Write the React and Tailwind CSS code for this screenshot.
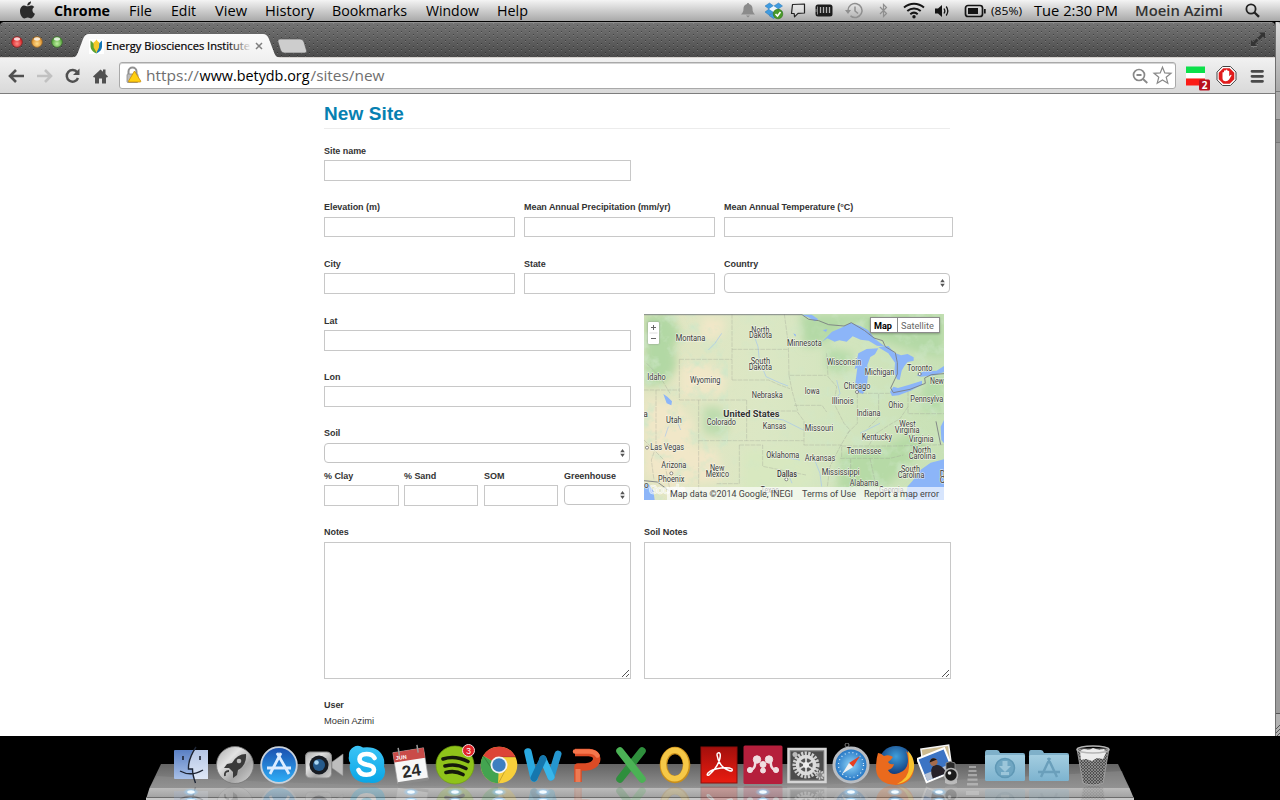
import React from "react";

/* ---------- macOS menu bar ---------- */
const menus = [
  ["Chrome", "w-[75px] font-bold", 56],
  ["File", "w-[42px]", 23],
  ["Edit", "w-[44px]", 25],
  ["View", "w-[50px]", 32],
  ["History", "w-[67px]", 49],
  ["Bookmarks", "w-[94px]", 75],
  ["Window", "w-[71px]", 53],
  ["Help", "w-[40px]", 31],
];

function FitText({ children, width, size, weight = 400, fill = "#000", height = 22, base = 16, family = "Open Sans" }) {
  return (
    <svg width={width + 2} height={height} className="block shrink-0 overflow-visible">
      <text x="0" y={base} fontFamily={`${family}, sans-serif`} fontSize={size} fontWeight={weight} fill={fill} textLength={width} lengthAdjust="spacingAndGlyphs">
        {children}
      </text>
    </svg>
  );
}

function StatusIcons() {
  return (
    <svg width="260" height="21" viewBox="738 0 260 21" className="block shrink-0">
      <path d="M748 3c-.8 0-1 .5-1 1-2.500.5-3.500 2.500-3.500 4.500 0 3-.8 4.500-2.500 6h14c-1.700-1.500-2.500-3-2.500-6 0-2-1-4-3.500-4.500 0-.5-.2-1-1-1zM746 15.500h4l-2 2z" fill="#8b8b8b" />
      <g fill="#3f9be0" stroke="#2674b5" strokeWidth=".5">
        <path d="M765 6l4.500-3 4 3-4.500 3zM774 6l4.500-3 4 3-4.500 3zM765 12l4-3 4.500 3-4.500 3zM774 12l4-3 4.500 3-4.500 3z" />
        <path d="M769 15.500l4.500-3 4.500 3-4.500 3z" />
      </g>
      <path d="M769 9l4.500-3 4.500 3-4.500 3z" fill="#eef6fc" />
      <circle cx="778" cy="14" r="4.800" fill="#4a9a2a" stroke="#2f7316" strokeWidth=".6" />
      <path d="M775.500 14l2 2 3-4" stroke="#fff" strokeWidth="1.600" fill="none" />
      <path d="M792.500 4.500l12-.5v9l-6.500.3-3.500 3.500-.3-3.300h-2.700z" fill="#eee" fillOpacity=".4" stroke="#222" strokeWidth="1.200" strokeLinejoin="round" />
      <rect x="815.500" y="4.500" width="17" height="12" rx="2.500" fill="#1c1c1c" />
      <path d="M817.500 6.500v8M816 9v3" stroke="#bbb" strokeWidth=".7" />
      <path d="M820.500 7v6M823.500 7v6M826.500 7v6M829.500 7v6" stroke="#b5b5b5" strokeWidth="1.300" />
      <g fill="none" stroke="#8f8f8f" strokeWidth="1.500">
        <path d="M848 10.500a7 7 0 1 1 2.500 5.400" />
        <path d="M855 6.500v4.500l3 2.500" />
      </g>
      <path d="M845 10h6l-3 4z" fill="#8f8f8f" />
      <path d="M880 7l6.500 6.500-3 3V4.500l3 3L880 14" fill="none" stroke="#8f8f8f" strokeWidth="1.200" />
      <g fill="none" stroke="#151515" strokeWidth="2">
        <path d="M904 7.500c6-5 14-5 20 0M907.300 11c4-3.500 9.400-3.500 13.400 0M910.300 14.200c2.200-1.900 5.200-1.900 7.400 0" />
      </g>
      <circle cx="914" cy="16.800" r="1.700" fill="#151515" />
      <path d="M935 8.500h3l4-3.500v12l-4-3.500h-3z" fill="#151515" />
      <path d="M944 8.500q1.700 2.500 0 5M946.200 6.500q3.200 4.500 0 9" stroke="#151515" strokeWidth="1.300" fill="none" />
      <rect x="965.500" y="5.500" width="17" height="11" rx="2.500" fill="none" stroke="#151515" strokeWidth="1.700" />
      <rect x="968" y="8" width="10" height="6" fill="#151515" />
      <path d="M984 9h1.700v4.500H984z" fill="#151515" />
    </svg>
  );
}

function MenuBar() {
  return (
    <div className="flex h-[22px] items-start border-b border-black bg-linear-to-b from-[#f4f4f4] to-[#a9a9a9]">
      <svg width="54" height="21" className="block shrink-0">
        <path d="M31 1.500c.2 2-1.600 4-3.700 4.100C27 3.600 29 1.600 31 1.500zM27.500 6.300c1 0 2-1 3.800-.9 1.200 0 2.400.7 3 1.600-2.800 1.700-2.300 5.600.7 6.800-.8 2-2.200 4.500-3.900 4.600-1.300 0-1.700-.8-3.400-.8s-2.100.8-3.400.8c-2-.1-4.400-4-4.300-7.500.1-3.500 2.200-5.500 4.300-5.500 1.400 0 2.300.9 3.200.9z" fill="#2a2a2a" />
      </svg>
      {menus.map(([t, c, w]) => (
        <div key={t} className={"shrink-0 " + c}>
          <FitText width={w} size={14} weight={t === "Chrome" ? 700 : 400}>{t}</FitText>
        </div>
      ))}
      <div className="w-[201px] shrink-0" />
      <StatusIcons />
      <div className="w-[43px] shrink-0 -ml-[7px]"><FitText width={31} size={11} base={15}>(85%)</FitText></div>
      <div className="w-[101px] shrink-0"><FitText width={84} size={14}>Tue 2:30 PM</FitText></div>
      <div className="w-[110px] shrink-0"><FitText width={88} size={14} weight={600} fill="#333">Moein Azimi</FitText></div>
      <svg width="16" height="21" className="block shrink-0">
        <circle cx="6" cy="9" r="4.600" fill="none" stroke="#222" strokeWidth="1.800" />
        <path d="M9.500 12.500l4.500 4.300" stroke="#222" strokeWidth="2.300" />
      </svg>
    </div>
  );
}

/* ---------- Chrome window frame ---------- */
function TabStrip() {
  return (
    <svg width="1275" height="36" viewBox="0 22 1275 36" className="block shrink-0">
      <defs>
        <linearGradient id="strip" x1="0" y1="0" x2="0" y2="1">
          <stop offset="0" stopColor="#747474" />
          <stop offset="1" stopColor="#4a4a4a" />
        </linearGradient>
        <pattern id="dots" width="8" height="6" patternUnits="userSpaceOnUse">
          <path d="M1 1h1v1h-1zM5 4h1v1h-1z" fill="#000" opacity=".35" />
          <path d="M1 2h1v1h-1zM5 5h1v1h-1z" fill="#fff" opacity=".16" />
        </pattern>
        <linearGradient id="tabg" x1="0" y1="0" x2="0" y2="1">
          <stop offset="0" stopColor="#fbfbfb" />
          <stop offset="1" stopColor="#f1f1f1" />
        </linearGradient>
        <linearGradient id="tabfade" x1="226" x2="249" y1="0" y2="0" gradientUnits="userSpaceOnUse">
          <stop offset="0" stopColor="#000" />
          <stop offset="1" stopColor="#000" stopOpacity=".08" />
        </linearGradient>
        <radialGradient id="red" cy=".65"><stop offset="0" stopColor="#ff8d86" /><stop offset="1" stopColor="#d8262a" /></radialGradient>
        <radialGradient id="yel" cy=".65"><stop offset="0" stopColor="#ffdc8a" /><stop offset="1" stopColor="#e09430" /></radialGradient>
        <radialGradient id="grn" cy=".65"><stop offset="0" stopColor="#bff0a0" /><stop offset="1" stopColor="#5aa840" /></radialGradient>
      </defs>
      <path d="M0 58V26q0-4 4-4h1267q4 0 4 4v32z" fill="url(#strip)" />
      <path d="M0 58V26q0-4 4-4h1267q4 0 4 4v32z" fill="url(#dots)" />
      <path d="M3 22.500h1269" stroke="#8e8e8e" />
      <rect x="0" y="57" width="1275" height="1" fill="#d6d2cf" />
      <g strokeWidth=".8">
        <circle cx="17" cy="42" r="5.400" fill="url(#red)" stroke="#7d2a28" />
        <circle cx="37" cy="42" r="5.400" fill="url(#yel)" stroke="#8a5f28" />
        <circle cx="57" cy="42" r="5.400" fill="url(#grn)" stroke="#3c6a30" />
      </g>
      <g fill="#fff" opacity=".8">
        <ellipse cx="17" cy="39" rx="3" ry="1.700" /><ellipse cx="37" cy="39" rx="3" ry="1.700" /><ellipse cx="57" cy="39" rx="3" ry="1.700" />
      </g>
      <path d="M72 58c4-1 5-3 6.500-7l4.500-12q2-5 6-5h174q4 0 6 5l4.500 12c1.500 4 2.500 6 6.500 7z" fill="url(#tabg)" />
      <path d="M280 39h20q3 0 4 3l2.500 8.500q.8 2.500-2 2.500h-20q-3 0-4-3l-2.500-8q-.8-3 2-3z" fill="#cdcdcd" stroke="#4f4f4f" strokeWidth=".6" />
      <rect x="89" y="39" width="15" height="15" fill="#fff" />
      <path d="M96.500 46l5.500-5.500v6c0 3-2 5-5.500 7z" fill="#1377b8" />
      <path d="M90.500 40.500l6 5.500v7.500C93 52 90.500 49.500 90.500 46z" fill="#5da233" />
      <path d="M93.500 42.500q2-1 3-3 1 2 2.800 3l-.3 5-2.500 5-2.800-5z" fill="#f4c92b" />
      <text x="106" y="50.300" fontFamily="Open Sans, sans-serif" fontSize="10.500" fill="url(#tabfade)" stroke="url(#tabfade)" strokeWidth=".2" textLength="144" lengthAdjust="spacingAndGlyphs">Energy Biosciences Institute</text>
      <path d="M256 43l6 6M262 43l-6 6" stroke="#7f7f7f" strokeWidth="1.500" />
      <path d="M1259 32.500h6v6l-2-2-3.500 3.500-2-2 3.500-3.500zM1251 46v-6l2 2 3.500-3.500 2 2-3.500 3.500 2 2z" fill="#343434" />
      <path d="M1251 46.500h6" stroke="#999" strokeWidth=".6" />
    </svg>
  );
}

function Toolbar() {
  return (
    <div className="flex h-9 items-center border-b border-[#7d7d7d] bg-linear-to-b from-[#f1f1f1] to-[#d9d9d9]">
      <svg width="119" height="34" viewBox="0 58 119 34" className="block shrink-0">
        <path d="M10 75h14M16 69l-6 6 6 6" fill="none" stroke="#505050" strokeWidth="2.600" />
        <path d="M37 75h14M45 69l6 6-6 6" fill="none" stroke="#c1c1c1" strokeWidth="2.600" />
        <path d="M77.300 71.500A5.800 5.800 0 1 0 78 77" fill="none" stroke="#505050" strokeWidth="2.500" />
        <path d="M79.500 67.500v6.500H73z" fill="#505050" />
        <path d="M93 75.500l7.500-7 2.500 2.300V68.500h2.500v4.500L108 75.500l-1.200 1.200-.8-.7V82.500h-4v-5h-3v5h-4v-6.500l-.8.700z" fill="#505050" />
      </svg>
      <div className="flex h-[27px] w-[1057px] shrink-0 items-center rounded-[3px] border border-[#a9a9a9] bg-white shadow-[inset_0_1px_0_#d4d4d4]">
        <svg width="26" height="25" viewBox="120 63 26 25" className="block shrink-0">
          <path d="M128.500 74v-2.500a4 4 0 0 1 8 0V74" fill="none" stroke="#909090" strokeWidth="2" />
          <rect x="127" y="74" width="11" height="8.500" rx="1" fill="#bbb" stroke="#888" strokeWidth=".8" />
          <path d="M134.500 71l6.200 10q.4 1-.6 1h-11q-1 0-.5-1z" fill="#ffd012" stroke="#c98d05" strokeWidth=".8" />
        </svg>
        <svg width="240" height="25" className="block shrink-0 overflow-visible">
          <text y="18" fontFamily="Open Sans, sans-serif" fontSize="14.500" fill="#6f6f6f">
            <tspan x="0" textLength="53" lengthAdjust="spacingAndGlyphs">https://</tspan>
            <tspan x="53.500" fill="#000" textLength="110" lengthAdjust="spacingAndGlyphs">www.betydb.org</tspan>
            <tspan x="164.500" textLength="74" lengthAdjust="spacingAndGlyphs">/sites/new</tspan>
          </text>
        </svg>
        <svg width="45" height="25" viewBox="1130 63 45 25" className="ml-auto block shrink-0">
          <circle cx="1139" cy="75" r="5.500" fill="none" stroke="#888" strokeWidth="1.700" />
          <path d="M1136.500 75h5M1143 79l4.300 4" stroke="#888" strokeWidth="1.800" />
          <path d="M1162.500 67.200l2.300 5.700 6.200.4-4.800 3.900 1.600 6-5.300-3.300-5.300 3.300 1.600-6-4.800-3.900 6.200-.4z" fill="#fff" stroke="#888" strokeWidth="1.200" />
        </svg>
      </div>
      <svg width="99" height="34" viewBox="1176 58 99 34" className="block shrink-0">
        <rect x="1186" y="65.500" width="19" height="6.500" fill="#0ce04a" />
        <rect x="1186" y="72" width="19" height="5.500" fill="#fff" />
        <rect x="1186" y="77.500" width="19" height="7" fill="#fb1b16" />
        <rect x="1199" y="78.500" width="11" height="11" rx="1.500" fill="#b8101f" />
        <text x="1204.500" y="87.800" textAnchor="middle" fontFamily="Open Sans, sans-serif" fontWeight="700" fontSize="10" fill="#fff">2</text>
        <g transform="translate(0 -.5)">
          <path d="M1222.600 66h7.800l5.600 5.600v7.800l-5.600 5.600h-7.800l-5.600-5.600v-7.800z" fill="#fff" stroke="#444" strokeWidth="1" />
          <path d="M1223.300 67.700h6.400l4.600 4.600v6.400l-4.600 4.600h-6.400l-4.600-4.600v-6.400z" fill="#e01b1b" />
          <path d="M1222.500 75v-3q.8-1 1.500 0v-1.800q.9-1 1.700 0v-.6q1-1 1.800 0v.9q1-.8 1.700.2v5l1.300-1.300q1.200-.3 1 .6l-2.400 4q-1.200 1.800-3.500 1.700-3 0-3.100-3z" fill="#fff" />
        </g>
        <path d="M1252 70.300h10.500M1252 75.300h10.500M1252 80.300h10.500" stroke="#4a4a4a" strokeWidth="2.800" strokeLinecap="round" />
      </svg>
    </div>
  );
}

/* ---------- Form ---------- */
function Label({ children, gap = "mb-[2px]" }) {
  return (
    <div className={"h-[14px] whitespace-nowrap font-['Liberation_Sans',sans-serif] text-[9px] leading-[14px] font-bold tracking-[-0.05px] text-[#333] " + gap}>
      {children}
    </div>
  );
}

function Field({ label, w, h = "h-[21px]", gap }) {
  return (
    <div>
      <Label gap={gap}>{label}</Label>
      <input className={"block border border-[#c8c8c8] bg-white outline-none " + h + " " + w} />
    </div>
  );
}

function Select({ label, w, gap }) {
  return (
    <div>
      <Label gap={gap}>{label}</Label>
      <div className={"flex h-5 items-center justify-end rounded-[4px] border border-[#c4c4c4] bg-white pr-[4px] " + w}>
        <svg width="5" height="8" viewBox="0 0 5 8"><path d="M2.500 0L4.800 3.200H.2zM2.500 8L4.800 4.800H.2z" fill="#555" /></svg>
      </div>
    </div>
  );
}

function TextArea({ label }) {
  return (
    <div>
      <Label gap="mb-[3px]">{label}</Label>
      <div className="flex h-[137px] w-[307px] items-end justify-end border border-[#c8c8c8] bg-white">
        <svg width="9" height="9"><path d="M1 8L8 1M5 8l3-3" stroke="#555" fill="none" /></svg>
      </div>
    </div>
  );
}

/* label, x, baseline y, width */
const places = [
  ["Montana", 107, 94, 89], ["North", 334, 68, 54], ["Dakota", 327, 85, 69], ["Minnesota", 441, 107, 104],
  ["South", 332, 163, 58], ["Dakota", 326, 181, 70], ["Wisconsin", 560, 165, 104], ["Michigan", 674, 195, 89],
  ["Toronto", 801, 183, 76], ["Idaho", 22, 211, 55], ["Wyoming", 150, 219, 91], ["New", 870, 222, 41],
  ["Chicago", 611, 237, 80], ["Nebraska", 335, 264, 93], ["Iowa", 494, 251, 45], ["Illinois", 575, 283, 66],
  ["Pennsylva", 811, 276, 99], ["Ohio", 745, 295, 45], ["Indiana", 650, 317, 71], ["Utah", 78, 340, 47],
  ["Colorado", 200, 345, 88], ["Kansas", 368, 357, 71], ["Missouri", 494, 363, 86], ["West", 778, 350, 49],
  ["Virginia", 764, 369, 75], ["Kentucky", 665, 391, 91], ["Virginia", 806, 395, 75], ["Las Vegas", 31, 421, 101],
  ["Tennessee", 620, 433, 104], ["North", 818, 429, 55], ["Carolina", 806, 447, 81], ["Oklahoma", 379, 443, 99],
  ["Arkansas", 494, 453, 92], ["Arizona", 64, 475, 75], ["New", 210, 483, 43], ["Mexico", 197, 500, 70],
  ["Phoenix", 54, 515, 79], ["Dallas", 411, 500, 60], ["Mississippi", 545, 495, 114], ["South", 783, 485, 57],
  ["Carolina", 773, 503, 80], ["Alabama", 629, 527, 86], ["Georgia", 717, 548, 74], ["Texas", 362, 550, 54],
];

function UsMap() {
  return (
    <div className="relative h-[186px] w-[300px] shrink-0 overflow-hidden">
      <svg width="300" height="186" viewBox="12 12 900 558" className="block">
        <defs>
          <filter id="soft" x="-20%" y="-20%" width="140%" height="140%"><feGaussianBlur stdDeviation="12" /></filter>
          <filter id="mott" x="0" y="0" width="100%" height="100%">
            <feTurbulence type="fractalNoise" baseFrequency=".022" numOctaves="4" seed="7" />
            <feColorMatrix values="0 0 0 0 .62  0 0 0 0 .80  0 0 0 0 .58  3.5 0 0 0 -1.75" />
          </filter>
          <linearGradient id="land" x1="0" x2="1"><stop offset="0" stopColor="#e3e5c2" /><stop offset=".4" stopColor="#dbe7c4" /><stop offset="1" stopColor="#c8e1b6" /></linearGradient>
        </defs>
        <rect x="12" y="12" width="900" height="558" fill="url(#land)" />
        <g filter="url(#soft)">
          <path d="M12 12h80l30 60-20 40 10 60-40 50-60 10z" fill="#b2d8a4" />
          <path d="M190 20l70 10-20 50-60 10zM120 160l70 0 70 30-10 60-130 10zM20 270l90 10 50 60-10 190-40 20-90-60zM150 410l80 10 20 90-90 10z" fill="#f1e7c8" />
          <path d="M190 290l50 0 30 50-20 40-60-10z" fill="#bddcae" />
          <path d="M480 12h432v130l-60-10-130-40-90-50-80 60-60 10z" fill="#b4d9a6" />
          <path d="M600 430l130-20 100-50 20 60-60 60-60 60-140 10z" fill="#b6daa6" />
          <path d="M310 420l150 0 70 60-30 70-190 10z" fill="#d8e8c0" />
          <path d="M560 110l80 20-20 60-60-10zM850 220l62-40v130l-70-10z" fill="#b7dcaa" />
        </g>
        <rect x="12" y="12" width="250" height="558" filter="url(#mott)" opacity=".75" />
        <rect x="262" y="12" width="300" height="558" filter="url(#mott)" opacity=".25" />
        <rect x="562" y="12" width="350" height="558" filter="url(#mott)" opacity=".6" />
        <g fill="#8cb5f8">
          <path d="M546 95l30-30 28-12 28-15 28 10 24 12 22 28 30 22-25-3-25-15-24-3-24-10-18 16-22-4-14 4-22-10z" />
          <path d="M655 130l25-13 35-2-10 18-14 8-9 24 2 30-4 40-12 17-14-6-8-28 6-45-8 5z" />
          <path d="M715 112l30-4 18 20 20 8 20-4 18 10 0 10-18 4-10 12-8 14-6 28-8-2-8-20 2-30-20-28z" />
          <path d="M750 246l10-16 14 4 34-10 38-12 0 12-34 18-36 14-20 2z" />
          <path d="M830 196l20-12 40-2 22-14v18l-28 10-42 4z" />
          <path d="M912 330l-10 20 2 40 8 10zM912 448l-40 10-34 24-20 30-16 18-6 40h116z" />
          <path d="M12 520l14 2 14 20 4 28H12zM70 252l12 8 14 14-2 12-14-6z" />
          <path d="M485 14l20 8 20 12 10-6-20-14zM548 60l14-2-4 8zM460 70l8 4-2 6z" />
        </g>
        <path d="M340 70l14 40 4 40 20 50 40 18 26 10M205 120l20-20 20-30M110 330l12 30M370 320l60 10 60 30M520 440l20 50 5 40M590 210l10 40-20 30M660 370l60-30M420 440l60 10M75 380l10-30M440 480l16 40" fill="none" stroke="#a5c5ef" strokeWidth="2" />
        <path d="M276 12v198M276 118h168M276 210h110l30 14 34 12M118 148h158M118 148v122M12 240h106M118 270h202M176 270v300M320 270v122M48 240v170l-14 40 8 60M176 392h315M320 303h150l22 30v72M298 405h70v64l60 12 70 14M298 405v116h-70M433 12l12 90 2 94h112M447 196l10 50 16 56M462 286h84l14 20M491 405h114v40M560 130l4 70 26 30-8 50 30 60 18 20-30 50-30 60-8 60M652 250v90l-30 30M716 252v70l-30 30M650 250h100M804 245v66h108M804 290l-24 36-34 20-40 26-20 36M605 408h160l147-4M600 445h150l40-10M632 445v120M690 445l24 110M12 390l60 60 20 100M20 160l40 40 30 50" fill="none" stroke="#9d9f92" strokeWidth="2" strokeDasharray="14 3" opacity=".5" />
        <path d="M12 14h474l20 14 30 4 30 12 46 4 22-10 40 24 28 22 26 8 8 18 30 18 6 30 0 34-20 42 8 14 50-10 46-18-2-16 20-10 50-4 18-20M12 512l40 4 60 44M888 334l14 70" fill="none" stroke="#777b80" strokeWidth="2.600" />
        <g fill="#fff" stroke="#555" strokeWidth="2">
          <circle cx="21" cy="413" r="4.500" /><circle cx="94" cy="490" r="4.500" /><circle cx="439" cy="508" r="4.500" /><circle cx="651" cy="246" r="4.500" /><circle cx="839" cy="192" r="4.500" />
        </g>
        <g fontFamily="Roboto, sans-serif" fontSize="25" fill="#3a3a3a" stroke="#f6f8ee" strokeWidth="4" strokeOpacity=".75" paintOrder="stroke" strokeLinejoin="round">
          {places.map(([t, x, y, w], i) => (
            <text key={i} x={x} y={y} textLength={w} lengthAdjust="spacingAndGlyphs" fontWeight={t === "Dallas" ? 500 : 400}>{t}</text>
          ))}
          <text x="250" y="321" textLength="169" lengthAdjust="spacingAndGlyphs" fontWeight="700" fontSize="27" fill="#333">United States</text>
          <text x="10" y="320">a</text>
          <text x="12" y="534">o</text>
          <text x="899" y="501">D</text>
          <text x="899" y="520">C</text>
        </g>
        <text x="26" y="552" textLength="110" fontFamily="Roboto, sans-serif" fontSize="38" fontWeight="700" fill="#fff" fillOpacity=".35" stroke="#fff" strokeWidth="2" strokeOpacity=".8">Google</text>
      </svg>
      <div className="absolute top-[8px] left-[4px] flex h-[22px] w-[11px] flex-col rounded-[1px] bg-white shadow-[0_0_2px_#888]">
        <svg width="11" height="22"><path d="M3 5.500h5M5.500 3v5M3 16.500h5" stroke="#666" fill="none" /><path d="M1.500 11h8" stroke="#ddd" /></svg>
      </div>
      <div className="absolute top-[3px] left-[226px] flex h-[16px] w-[70px] border border-[#8c8c8c] bg-white shadow-[0_1px_2px_#0004]">
        <div className="flex w-[27px] justify-center border-r border-[#8c8c8c]"><FitText width={18} size={9} weight={700} height={14} base={11} family="Roboto">Map</FitText></div>
        <div className="flex flex-1 justify-center"><FitText width={33} size={9} height={14} base={11} fill="#666" family="Roboto">Satellite</FitText></div>
      </div>
      <div className="absolute right-0 bottom-0 flex h-[13px] w-[277px] items-center bg-white/65 pl-[3px]">
        <div className="w-[132px]"><FitText width={123} size={9} height={13} base={10} fill="#444" family="Roboto">Map data ©2014 Google, INEGI</FitText></div>
        <div className="w-[62px] shrink-0"><FitText width={54} size={9} height={13} base={10} fill="#444" family="Roboto">Terms of Use</FitText></div>
        <FitText width={75} size={9} height={13} base={10} fill="#444" family="Roboto">Report a map error</FitText>
      </div>
    </div>
  );
}

function Page() {
  return (
    <div className="h-[642px] overflow-hidden bg-white pl-[324px]">
      <div className="h-[35px] w-[626px] border-b border-[#ececec] pt-[8px] font-['Liberation_Sans',sans-serif] text-[19px] leading-[24px] font-bold tracking-[0.1px] text-[#0680b1]">New Site</div>
      <div className="pt-[15px]"><Field label="Site name" w="w-[307px]" /></div>
      <div className="flex gap-[9px] pt-[19px]">
        <Field label="Elevation (m)" w="w-[191px]" h="h-5" gap="mb-[3px]" />
        <Field label="Mean Annual Precipitation (mm/yr)" w="w-[191px]" h="h-5" gap="mb-[3px]" />
        <Field label="Mean Annual Temperature (°C)" w="w-[229px]" h="h-5" gap="mb-[3px]" />
      </div>
      <div className="flex gap-[9px] pt-5">
        <Field label="City" w="w-[191px]" />
        <Field label="State" w="w-[191px]" />
        <Select label="Country" w="w-[226px]" />
      </div>
      <div className="flex pt-5">
        <div className="w-[320px] shrink-0">
          <Field label="Lat" w="w-[307px]" />
          <div className="pt-[19px]"><Field label="Lon" w="w-[307px]" /></div>
          <div className="pt-[19px]"><Select label="Soil" w="w-[306px]" gap="mb-[3px]" /></div>
          <div className="flex pt-[6px]">
            <div className="w-20"><Field label="% Clay" w="w-[75px]" /></div>
            <div className="w-20"><Field label="% Sand" w="w-[74px]" /></div>
            <div className="w-20"><Field label="SOM" w="w-[74px]" /></div>
            <Select label="Greenhouse" w="w-[66px]" />
          </div>
        </div>
        <UsMap />
      </div>
      <div className="flex gap-[13px] pt-[19px]">
        <TextArea label="Notes" />
        <TextArea label="Soil Notes" />
      </div>
      <div className="pt-[19px]">
        <Label>User</Label>
        <div className="font-['Liberation_Sans',sans-serif] text-[9.3px] leading-[14px] text-[#333]">Moein Azimi</div>
      </div>
    </div>
  );
}

/* ---------- Dock ---------- */
const icons = {
  finder: (
    <>
      <rect x="5" y="7" width="34" height="29" rx="1" fill="url(#fl)" />
      <path d="M24 7h15v29H25q-2-5-2-10h-4q0-10 5-19z" fill="url(#fr)" />
      <path d="M27 4q-8 12-7.500 22h4q0 6 3 14M11 28q11 6 23-1" fill="none" stroke="#1d2433" strokeWidth="1.400" />
      <path d="M14 13v4M31 13v4" stroke="#1d2433" strokeWidth="1.600" />
    </>
  ),
  launch: (
    <>
      <circle cx="22" cy="22" r="18.500" fill="url(#silver)" stroke="#777" strokeWidth=".8" />
      <path d="M33 11q-9 0-14 9l-5 1-3 4 5 0 4 4v6l4-3 1-5q9-5 8-16z" fill="#3a3a3a" /><circle cx="26" cy="18" r="2.300" fill="#bbb" />
      <path d="M16 28q-5 0-4 5" stroke="#3a3a3a" strokeWidth="1.800" fill="none" />
    </>
  ),
  store: (
    <>
      <circle cx="22" cy="22" r="17.800" fill="url(#blue)" stroke="#c9d2dc" strokeWidth="1.800" />
      <path d="M24 10L13 31M20 10l12 21M10 25h24" stroke="#dcecff" strokeWidth="2.800" />
    </>
  ),
  facetime: (
    <>
      <path d="M42 11v22l-11-8v-6z" fill="#bdbdbd" stroke="#888" strokeWidth=".6" />
      <rect x="4.500" y="9" width="26" height="26" rx="4.500" fill="url(#silver)" stroke="#8b8b8b" />
      <circle cx="18" cy="22" r="9.500" fill="#171b22" /><circle cx="18" cy="22" r="6" fill="#255a8c" /><circle cx="15.500" cy="19.500" r="2.300" fill="#a9d7f5" />
    </>
  ),
  skype: (
    <>
      <path d="M4 13a9 9 0 0 1 14-8.500q17-2 21 12 .5 3 0 7 3 7-2 13-6 5-13 3Q9 41 5 27q-.8-4 .3-7Q3 17 4 13z" fill="url(#sky)" />
      <path d="M29.500 15q-2-4-8-4-7 0-7 5.300 0 4 7.500 5.500 7 1.200 7 5 0 5-7.500 5-6 0-8-4.800" fill="none" stroke="#fff" strokeWidth="4.600" strokeLinecap="round" />
    </>
  ),
  calendar: (
    <>
      <g transform="rotate(-9 22 22)">
        <rect x="6" y="7" width="31" height="31" fill="#f7f7f7" stroke="#aaa" strokeWidth=".6" />
        <rect x="6" y="7" width="31" height="10" fill="#c94b48" />
        <path d="M6 37h31v3H6z" fill="#8a8a8a" />
        <path d="M12 3v8M31 3v8" stroke="#999" strokeWidth="1.500" />
      </g>
    </>
  ),
  spotify: (
    <>
      <circle cx="22" cy="22" r="19" fill="#8fc31a" stroke="#6f9d10" strokeWidth=".7" />
      <path d="M10 16q12-4 25 2.500M12 23q11-3 21 2.500M13 29.500q9-2.500 17 2" fill="none" stroke="#15190b" strokeWidth="3.600" strokeLinecap="round" />
    </>
  ),
  chrome: (
    <>
      <circle cx="22" cy="22" r="18.300" fill="#f7cf3b" />
      <path d="M22 22L6.200 12.800A18.300 18.300 0 0 1 38.500 14H22z" fill="#dd4437" />
      <path d="M22 22l-1 18.300A18.300 18.300 0 0 1 6.200 12.800z" fill="#43a450" />
      <path d="M22 14h16.500M15 26L6.200 12.800M29 26l-7.500 14" stroke="#0003" />
      <circle cx="22" cy="22" r="8.500" fill="#f4f4f4" /><circle cx="22" cy="22" r="6.700" fill="#3d7fc0" />
    </>
  ),
  word: (
    <>
      <path d="M7 9l6 26" stroke="#2aa9e0" strokeWidth="7.500" strokeLinecap="round" />
      <path d="M30 34l7-23" stroke="#2596cf" strokeWidth="7" strokeLinecap="round" />
      <path d="M22 16l8 18" stroke="#38b6ea" strokeWidth="7" strokeLinecap="round" />
      <path d="M13 35l9-19" stroke="#1577ae" strokeWidth="7" strokeLinecap="round" />
    </>
  ),
  ppt: (
    <>
      <path d="M10 9.500h14q9 1 7.500 8-2 6-11 6.500H13v15" fill="none" stroke="#dc4b25" strokeWidth="7.500" strokeLinejoin="round" />
      <path d="M10 8.500h14q6 0 8.500 4" fill="none" stroke="#f5764c" strokeWidth="4.500" strokeLinecap="round" />
      <path d="M13 26v13" stroke="#ee7a52" strokeWidth="5" />
    </>
  ),
  excel: <><path d="M33 8L11 36" stroke="#2f8f3d" strokeWidth="7.500" strokeLinecap="round" /><path d="M11 8l22 28" stroke="#4bb255" strokeWidth="7.500" strokeLinecap="round" /></>,
  outlook: <><ellipse cx="22" cy="22" rx="11.500" ry="14.500" fill="none" stroke="#c98e19" strokeWidth="7.500" /><ellipse cx="21.700" cy="21.500" rx="11.300" ry="14.300" fill="none" stroke="#f6c847" strokeWidth="5.500" /></>,
  acrobat: (
    <>
      <rect x="4" y="4" width="36" height="36" fill="url(#ar)" stroke="#8d0f0b" />
      <path d="M21 10q3-1 2 5-2 9-11 17-3 1-1-2 4-4 13-5 8-1 11 1 1 3-3 1.500Q22 24 20 12q0-2 1-2z" fill="none" stroke="#fff" strokeWidth="1.500" />
    </>
  ),
  mendeley: (
    <>
      <rect x="2.500" y="2.500" width="39" height="38.500" rx="1.500" fill="#b51f3c" />
      <g fill="#f0dde0" stroke="#f0dde0"><circle cx="16" cy="16.500" r="3.700" /><circle cx="28" cy="16.500" r="3.700" /><circle cx="22" cy="21.500" r="3" /><circle cx="9" cy="27" r="2.600" /><circle cx="35" cy="27" r="2.600" /><circle cx="22" cy="27.500" r="2.500" />
        <path d="M10 27q5-2 4-9M34 27q-5-2-4-9" fill="none" strokeWidth="2.500" /></g>
    </>
  ),
  settings: (
    <>
      <rect x="3.500" y="6" width="37" height="33" fill="#777" stroke="#d5d5d5" strokeWidth="2.500" />
      <rect x="6" y="8.500" width="32" height="28" fill="#4c4c4c" />
      <circle cx="21" cy="22" r="11.500" fill="none" stroke="#d0d0d0" strokeWidth="4" strokeDasharray="2.200 1.300" />
      <circle cx="21" cy="22" r="8.500" fill="#555" stroke="#dcdcdc" strokeWidth="3.500" /><path d="M21 14v16M14 18l14 8M28 18l-14 8" stroke="#ddd" strokeWidth="1.800" /><circle cx="21" cy="22" r="3" fill="#eee" />
      <circle cx="35" cy="32" r="3.500" fill="#888" stroke="#ccc" strokeWidth="2.500" strokeDasharray="1.500 1" /><circle cx="10" cy="11.500" r="2.500" fill="#bbb" />
    </>
  ),
  safari: (
    <>
      <circle cx="18" cy="2" r="2" fill="none" stroke="#777" />
      <circle cx="22" cy="22" r="17" fill="url(#blue2)" stroke="#b9bdc2" strokeWidth="3" />
      <circle cx="22" cy="22" r="12.500" fill="none" stroke="#dff1ff" strokeWidth="1.200" strokeDasharray="1 3" />
      <path d="M31 13l-7 11-4-4z" fill="#e83e1e" /><path d="M13 31l7-11 4 4z" fill="#f1f1f1" />
    </>
  ),
  firefox: (
    <>
      <circle cx="23" cy="20.500" r="17.500" fill="url(#ffb)" />
      <path d="M5 10q3 0 6 3 5-2 9 1-2 3-5 5 2 3 6 2-1 5-6 6 3 6 11 3 9-3 9-13 0-5-2-9 9 7 8 18-2 15-18 16Q4 41 3 26 3 16 5 10z" fill="#ea6a1d" />
      <path d="M35 8q7 7 6 17-3 14-17 16 12-6 12-17 0-8-1-16z" fill="#f9c32e" />
    </>
  ),
  preview: (
    <>
      <g transform="rotate(-8 20 20)"><rect x="6" y="4" width="28" height="24" fill="#cdbb90" stroke="#f5f5f5" strokeWidth="1.500" /></g>
      <g transform="rotate(-22 20 22)"><rect x="4" y="9" width="29" height="25" fill="#3c74c4" stroke="#fff" strokeWidth="2" /><path d="M5 26h27v7H5z" fill="#b9c3d4" /><path d="M11 33q0-11 7-12 7 2 8 12z" fill="#27222a" /><circle cx="18" cy="18" r="3.800" fill="#a56b4c" /><path d="M14 17q4-6 8 0z" fill="#1b1414" /></g>
      <path d="M29 20q4-3 9 0v7h-9z" fill="#2a2a2a" stroke="#999" strokeWidth=".8" />
      <circle cx="34" cy="32" r="6.500" fill="#1b1b1b" stroke="#b5b5b5" strokeWidth="1.600" />
      <path d="M28 36q6 5 12 0v4q-6 3-12 0z" fill="#bbb" /><circle cx="32.500" cy="30" r="1.800" fill="#eee" />
    </>
  ),
};

const Folder = ({ children }) => (
  <>
    <path d="M2 10q0-3 2-3h10q2 0 3 3h23q2 0 2 2v24H2z" fill="#7fb0c9" />
    <rect x="2" y="12" width="40" height="26" rx="1.500" fill="url(#fold)" />
    {children}
  </>
);

icons.downloads = (
  <Folder><circle cx="22" cy="25" r="9.500" fill="#6fa6c2" stroke="#5f98b5" strokeWidth="1.500" /><path d="M19.500 18h5v5h3.500l-6 6-6-6h3.500zM18 29v3h8v-3" fill="#9cc6da" /></Folder>
);
icons.apps = (
  <Folder><path d="M23 15L14 34M21 15l9 19M11 29h22" stroke="#6a9fbb" strokeWidth="2.400" /></Folder>
);
icons.trash = (
  <>
    <path d="M6 6l6 34q10 4 20 0l6-34z" fill="url(#mesh)" />
    <path d="M6 6l6 34q10 4 20 0l6-34z" fill="#999" fillOpacity=".2" stroke="#aaa" strokeWidth=".8" />
    <path d="M9 8l4-2 5 1 4-2 6 2 5-1 2 4-3 6-6-1-5 3-6-2-5 1z" fill="#ececec" />
    <ellipse cx="22" cy="6.500" rx="16" ry="3.500" fill="none" stroke="#b5b5b5" strokeWidth="1.400" />
  </>
);

/* lettering drawn on top of an icon, left out of its reflection */
const lettering = {
  calendar: (
    <g transform="rotate(-9 22 22)" fontFamily="Liberation Sans, sans-serif" fontWeight="700">
      <text x="8" y="15" fontSize="5.500" fill="#fff">JUN</text>
      <text x="12" y="33.500" fontSize="17" fill="#2a2a2a">24</text>
    </g>
  ),
  spotify: (
    <>
      <circle cx="35.500" cy="7.500" r="6" fill="#e0252b" stroke="#f3dddd" strokeWidth="1" />
      <text x="35.500" y="10.500" textAnchor="middle" fontFamily="Liberation Sans, sans-serif" fontSize="8.500" fill="#fff">3</text>
    </>
  ),
};

const dock = [
  ["finder", 1], ["launch", 0], ["store", 0], ["facetime", 0], ["skype", 0], ["calendar", 1], ["spotify", 1], ["chrome", 1], ["word", 1],
  ["ppt", 0], ["excel", 0], ["outlook", 0], ["acrobat", 0], ["mendeley", 1], ["settings", 0], ["safari", 1], ["firefox", 1], ["preview", 1],
];
const dockRight = ["downloads", "apps", "trash"];

function DockIcon({ name, lit }) {
  return (
    <svg width="44" height="57" viewBox="0 0 44 57" className="block shrink-0">
      <g transform="matrix(1 0 0 -1 0 84)" opacity=".2" clipPath="url(#refl)">{icons[name]}</g>
      {icons[name]}
      {lettering[name]}
      {lit ? (
        <>
          <ellipse cx="22" cy="49" rx="8" ry="4" fill="url(#lamp)" />
          <ellipse cx="22" cy="49" rx="3.800" ry="1.700" fill="#f4fbff" />
          <ellipse cx="22" cy="56.500" rx="7" ry="2.500" fill="url(#lamp)" />
          <ellipse cx="22" cy="57" rx="4" ry="1" fill="#eef8ff" />
        </>
      ) : null}
    </svg>
  );
}

function Dock() {
  return (
    <div className="relative h-16 overflow-hidden bg-black">
      <svg width="1280" height="64" viewBox="0 736 1280 64" className="absolute inset-0">
        <defs>
          <linearGradient id="shelf" x1="0" y1="0" x2="0" y2="1"><stop offset="0" stopColor="#646464" /><stop offset="1" stopColor="#909090" /></linearGradient>
          <linearGradient id="lip" x1="0" y1="0" x2="0" y2="1"><stop offset="0" stopColor="#bcbcbc" /><stop offset="1" stopColor="#a2a2a2" /></linearGradient>
          <linearGradient id="fl" x1="0" y1="0" x2="0" y2="1"><stop offset="0" stopColor="#5a80c4" /><stop offset="1" stopColor="#a8c0e8" /></linearGradient>
          <linearGradient id="fr" x1="0" y1="0" x2="0" y2="1"><stop offset="0" stopColor="#b4c5e4" /><stop offset="1" stopColor="#dfe8f6" /></linearGradient>
          <linearGradient id="silver" x1="0" y1="0" x2="1" y2="1"><stop offset="0" stopColor="#a8a8a8" /><stop offset=".35" stopColor="#e2e2e2" /><stop offset=".65" stopColor="#a5a5a5" /><stop offset="1" stopColor="#d6d6d6" /></linearGradient>
          <linearGradient id="blue" x1="0" y1="0" x2="0" y2="1"><stop offset="0" stopColor="#1a4eae" /><stop offset="1" stopColor="#2fb0f8" /></linearGradient>
          <radialGradient id="blue2"><stop offset="0" stopColor="#8fd4f8" /><stop offset="1" stopColor="#1d6fc0" /></radialGradient>
          <linearGradient id="sky" x1="0" y1="0" x2="0" y2="1"><stop offset="0" stopColor="#3cc4f6" /><stop offset="1" stopColor="#09a6e6" /></linearGradient>
          <linearGradient id="ar" x1="0" y1="0" x2="0" y2="1"><stop offset="0" stopColor="#a30f0c" /><stop offset="1" stopColor="#ea1c10" /></linearGradient>
          <radialGradient id="ffb" cy=".3"><stop offset="0" stopColor="#3f9fdc" /><stop offset="1" stopColor="#123c7c" /></radialGradient>
          <linearGradient id="fold" x1="0" y1="0" x2="0" y2="1"><stop offset="0" stopColor="#a3cde0" /><stop offset="1" stopColor="#7db3cf" /></linearGradient>
          <radialGradient id="lamp"><stop offset=".2" stopColor="#9bd4ff" /><stop offset="1" stopColor="#9bd4ff" stopOpacity="0" /></radialGradient>
          <pattern id="mesh" width="3" height="3" patternUnits="userSpaceOnUse"><rect width="3" height="3" fill="#3c3c3c" /><path d="M0 0l3 3M3 0l-3 3" stroke="#aaa" strokeWidth=".6" /></pattern>
          <clipPath id="refl"><rect x="0" y="26" width="44" height="18" /></clipPath>
        </defs>
        <path d="M161 764h957l11.500 24H149.500z" fill="url(#shelf)" />
        <path d="M157 776q160 11 440 11t525-16l6 17H149.500z" fill="#999" opacity=".35" />
        <path d="M149.500 788h980l4 9.500h-987z" fill="url(#lip)" />
        <path d="M146 797.500h988" stroke="#6c6c6c" />
        <path d="M146 798h988v2H146z" fill="#c8c8c8" />
        <path d="M969 766h7v2h-7zM968.500 770h8v2h-8zM968 774h9v2.200h-9zM967.500 778.500h10v2.300h-10zM967 783h11v2.500h-11zM966 791h13v4h-13z" fill="#c8c8c8" opacity=".6" />
      </svg>
      <div className="relative flex pt-[7px] pl-[169px]">
        {dock.map(([n, lit]) => <DockIcon key={n} name={n} lit={lit} />)}
        <div className="w-[22px] shrink-0" />
        {dockRight.map((n) => <DockIcon key={n} name={n} />)}
      </div>
    </div>
  );
}

export default function App() {
  return (
    <div className="h-[800px] w-[1280px] overflow-hidden bg-black">
      <MenuBar />
      <div className="flex h-[714px]">
        <div className="w-[1275px] shrink-0">
          <TabStrip />
          <Toolbar />
          <Page />
        </div>
        <div className="flex w-[5px] flex-col border-l border-[#6f6f6f] bg-[#9c9c9c]">
          <div className="h-[70px] rounded-tr-[3px] border-b border-[#777] bg-linear-to-b from-[#dcdcdc] to-[#a9a9a9]" />
          <div className="h-[28px] border-b border-[#777] bg-[#aaa]" />
          <div className="h-[23px] border-b border-[#777] bg-[#8f8f8f]" />
          <div className="flex-1 border-b border-[#555]" />
          <svg width="4" height="22"><rect width="4" height="22" fill="#b3b3b3" /><path d="M0 15l4-4M0 19l4-4M1 22l3-3" stroke="#555" /></svg>
        </div>
      </div>
      <Dock />
    </div>
  );
}
